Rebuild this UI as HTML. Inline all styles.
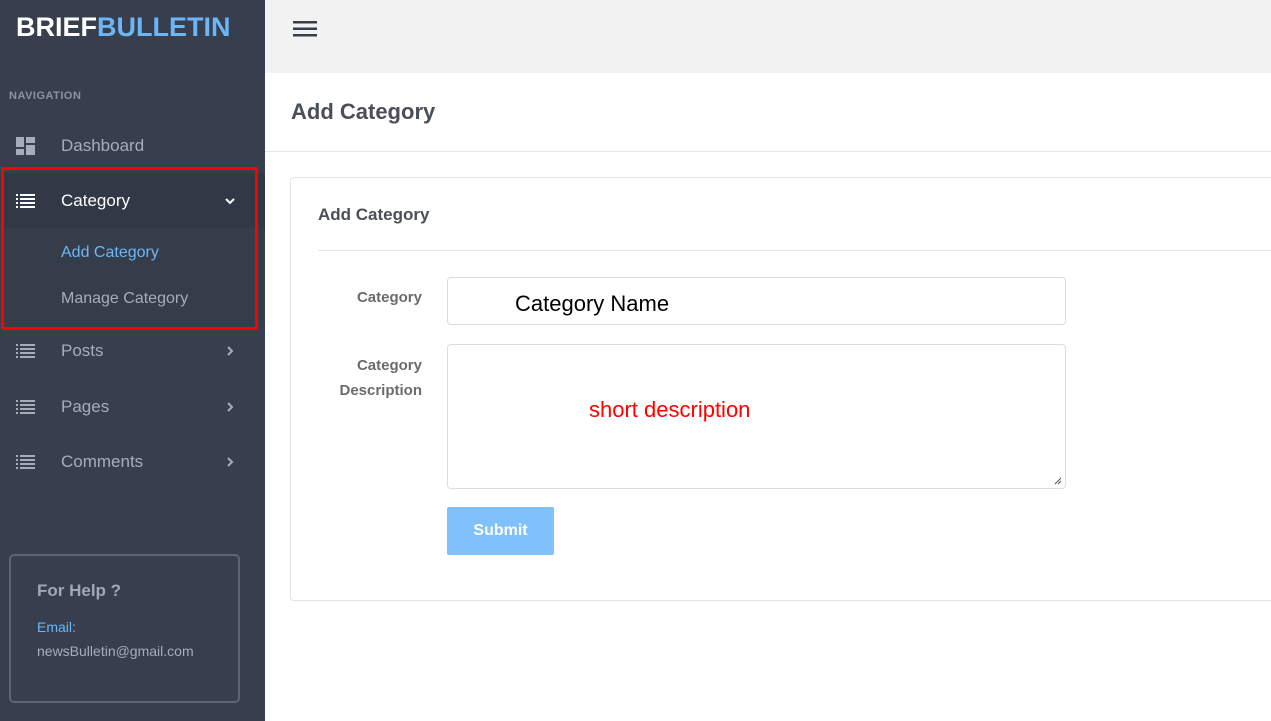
<!DOCTYPE html>
<html><head><style>
*{box-sizing:border-box;margin:0;padding:0}
body{width:1271px;height:721px;overflow:hidden;font-family:"Liberation Sans",sans-serif;background:#fff;position:relative}
.sb{position:absolute;left:0;top:0;width:265px;height:721px;background:#373f4e}
.logo{position:absolute;left:16px;top:12px;font-size:27px;font-weight:bold;letter-spacing:0;color:#fff}
.logo span{color:#6cb6f5}
.nav{position:absolute;left:9px;top:90px;font-size:11px;font-weight:bold;color:#8a93a0;letter-spacing:.5px}
.it{position:absolute;left:0;width:265px;height:55px;color:#a5adb8;font-size:17px}
.it .t{position:absolute;left:61px;top:50%;transform:translateY(-50%)}
.it .ic{position:absolute;left:16px;top:50%;transform:translateY(-50%)}
.it .ch{position:absolute;left:225px;top:50%;transform:translateY(-50%)}
.sub{position:absolute;left:0;top:228px;width:265px;height:98px;background:#353d4b}
.sub div{position:absolute;left:61px;font-size:16px}
.red{position:absolute;left:1px;top:167px;width:257px;height:163px;border:3px solid #f00}
.help{position:absolute;left:9px;top:554px;width:231px;height:149px;border:2px solid #5d6570;border-radius:5px}
.main{position:absolute;left:265px;top:0;right:0;bottom:0}
.hd{position:absolute;left:0;top:0;right:0;height:73px;background:#f2f2f2}
.ph{position:absolute;left:0;top:73px;right:0;height:79px;border-bottom:1px solid #e6e6e6}
.card{position:absolute;left:25px;top:177px;width:1000px;height:424px;border:1px solid #e3e3e3;border-radius:4px}
.lbl{position:absolute;color:#6b6b6b;font-size:15px;font-weight:bold;text-align:right}
.inp{position:absolute;border:1px solid #ddd;border-radius:4px;background:#fff}
</style></head><body>
<div class="sb">
<div class="logo">BRIEF<span>BULLETIN</span></div>
<div class="nav">NAVIGATION</div>
<div class="it" style="top:118px"><svg class="ic" width="19" height="18" viewBox="0 0 19 18"><rect x="0" y="0" width="8" height="10" fill="#a5adb8"/><rect x="10" y="0" width="9" height="6" fill="#a5adb8"/><rect x="0" y="12" width="8" height="6" fill="#a5adb8"/><rect x="10" y="8" width="9" height="10" fill="#a5adb8"/></svg><span class="t">Dashboard</span></div>
<div class="it" style="top:173px;background:#313846;color:#fff"><svg class="ic" width="19" height="14" viewBox="0 0 19 14"><g fill="#fff"><rect x="0" y="0" width="2" height="2"/><rect x="4" y="0" width="15" height="2"/><rect x="0" y="4" width="2" height="2"/><rect x="4" y="4" width="15" height="2"/><rect x="0" y="8" width="2" height="2"/><rect x="4" y="8" width="15" height="2"/><rect x="0" y="12" width="2" height="2"/><rect x="4" y="12" width="15" height="2"/></g></svg><span class="t">Category</span><svg class="ch" width="10" height="8" viewBox="0 0 10 8"><path d="M1 2l4 4 4-4" stroke="#fff" stroke-width="2" fill="none"/></svg></div>
<div class="sub"><div style="top:16px;color:#6cb6f5">Add Category</div><div style="top:62px;color:#a5adb8">Manage Category</div></div>
<div class="it" style="top:323px"><svg class="ic" width="19" height="14" viewBox="0 0 19 14"><g fill="#a5adb8"><rect x="0" y="0" width="2" height="2"/><rect x="4" y="0" width="15" height="2"/><rect x="0" y="4" width="2" height="2"/><rect x="4" y="4" width="15" height="2"/><rect x="0" y="8" width="2" height="2"/><rect x="4" y="8" width="15" height="2"/><rect x="0" y="12" width="2" height="2"/><rect x="4" y="12" width="15" height="2"/></g></svg><span class="t">Posts</span><svg class="ch" width="10" height="12" viewBox="0 0 10 12"><path d="M3 2l4 4-4 4" stroke="#a5adb8" stroke-width="2" fill="none"/></svg></div>
<div class="it" style="top:379px"><svg class="ic" width="19" height="14" viewBox="0 0 19 14"><g fill="#a5adb8"><rect x="0" y="0" width="2" height="2"/><rect x="4" y="0" width="15" height="2"/><rect x="0" y="4" width="2" height="2"/><rect x="4" y="4" width="15" height="2"/><rect x="0" y="8" width="2" height="2"/><rect x="4" y="8" width="15" height="2"/><rect x="0" y="12" width="2" height="2"/><rect x="4" y="12" width="15" height="2"/></g></svg><span class="t">Pages</span><svg class="ch" width="10" height="12" viewBox="0 0 10 12"><path d="M3 2l4 4-4 4" stroke="#a5adb8" stroke-width="2" fill="none"/></svg></div>
<div class="it" style="top:434px"><svg class="ic" width="19" height="14" viewBox="0 0 19 14"><g fill="#a5adb8"><rect x="0" y="0" width="2" height="2"/><rect x="4" y="0" width="15" height="2"/><rect x="0" y="4" width="2" height="2"/><rect x="4" y="4" width="15" height="2"/><rect x="0" y="8" width="2" height="2"/><rect x="4" y="8" width="15" height="2"/><rect x="0" y="12" width="2" height="2"/><rect x="4" y="12" width="15" height="2"/></g></svg><span class="t">Comments</span><svg class="ch" width="10" height="12" viewBox="0 0 10 12"><path d="M3 2l4 4-4 4" stroke="#a5adb8" stroke-width="2" fill="none"/></svg></div>
<div class="red"></div>
<div class="help">
<div style="position:absolute;left:26px;top:25px;color:#a0a8b2;font-size:17px;font-weight:bold">For Help ?</div>
<div style="position:absolute;left:26px;top:63px;color:#6cb6f5;font-size:14px">Email:</div>
<div style="position:absolute;left:26px;top:87px;color:#a5adb8;font-size:14px">newsBulletin@gmail.com</div>
</div>
</div>
<div class="main">
<div class="hd"><svg style="position:absolute;left:28px;top:20px" width="24" height="18" viewBox="0 0 24 18"><g fill="#363f4d"><rect y="1" width="24" height="2.5"/><rect y="7.5" width="24" height="2.5"/><rect y="14" width="24" height="2.5"/></g></svg></div>
<div class="ph"><div style="position:absolute;left:26px;top:26px;font-size:22px;font-weight:bold;color:#4a4f58">Add Category</div></div>
<div class="card">
<div style="position:absolute;left:27px;top:27px;font-size:17px;font-weight:bold;color:#4a4f58">Add Category</div>
<div style="position:absolute;left:27px;top:72px;width:960px;border-top:1px solid #e6e6e6"></div>
<div class="lbl" style="left:20px;width:111px;top:111px">Category</div>
<div class="inp" style="left:156px;top:99px;width:619px;height:48px"><span style="position:absolute;left:67px;top:13px;font-size:22px;color:#000">Category Name</span></div>
<div class="lbl" style="left:20px;width:111px;top:175px;line-height:25px">Category<br>Description</div>
<div class="inp" style="left:156px;top:166px;width:619px;height:145px"><span style="position:absolute;left:141px;top:52px;font-size:22px;color:#f00">short description</span><svg style="position:absolute;right:3px;bottom:3px" width="8" height="8" viewBox="0 0 8 8"><path d="M1 7L7 1M4 7L7 4" stroke="#555" stroke-width="1"/></svg></div>
<div style="position:absolute;left:156px;top:329px;width:107px;height:48px;background:#80c1fc;border-radius:2px;color:#fff;font-size:16px;font-weight:bold;text-align:center;line-height:48px">Submit</div>
</div>
</div>
</body></html>
